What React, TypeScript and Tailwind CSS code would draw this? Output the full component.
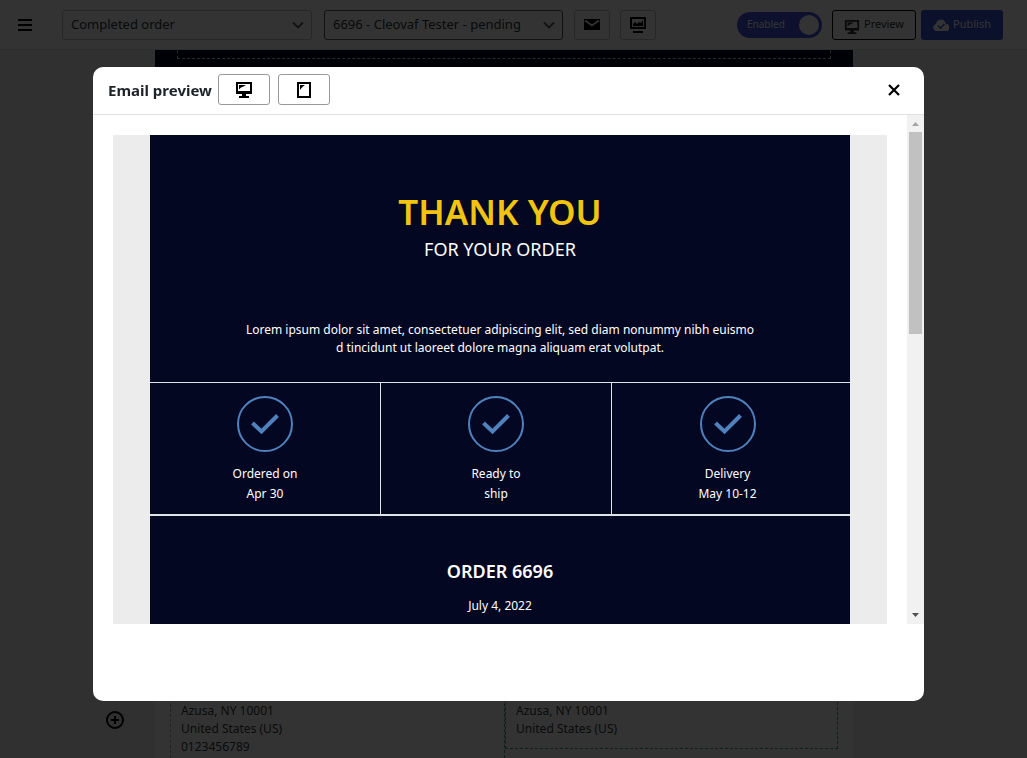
import React from "react";

function ScreenIcon({ className }: { className?: string }) {
  return (
    <svg viewBox="0 0 18 18" className={className} fill="currentColor" aria-hidden="true">
      <path fillRule="evenodd" d="M1 1h16v12h-6v2h3v2H4v-2h3v-2H1V1zm2 2v7h12V3H3z" />
      <path d="M4 4h7L8.500 5.500 6 6.500 4 8.500z" />
    </svg>
  );
}

function TabletIcon({ className }: { className?: string }) {
  return (
    <svg viewBox="0 0 18 18" className={className} fill="currentColor" aria-hidden="true">
      <path fillRule="evenodd" d="M2 1h14v16H2V1zm2 2v12h10V3H4z" />
      <path d="M5 4h5L8 5.500 6.500 7 5 9z" />
    </svg>
  );
}

function Chevron() {
  return (
    <svg
      viewBox="0 0 12 12"
      className="pointer-events-none absolute right-2 top-[9px] size-3"
      fill="none"
      stroke="#50575e"
      strokeWidth="1.800"
      aria-hidden="true"
    >
      <path d="M1 3.500l5 5 5-5" />
    </svg>
  );
}

function Picker({ label, value, box, tone }: { label: string; value: string; box: string; tone: string }) {
  return (
    <div className={`relative ${box}`}>
      <select
        aria-label={label}
        defaultValue={value}
        className={`block h-[30px] w-full appearance-none rounded-[3px] border bg-white pl-2 pr-6 text-[13px] text-[#2c3338] ${tone}`}
      >
        <option>{value}</option>
      </select>
      <Chevron />
    </div>
  );
}

function TopBar() {
  return (
    <header className="flex h-[50px] shrink-0 items-center border-b border-[#e0e0e0] bg-white pl-[18px] pr-6">
      <button aria-label="Menu" className="mr-[30px]">
        <svg viewBox="0 0 14 12" className="h-3 w-[14px]" aria-hidden="true">
          <path d="M0 0h14v2H0zM0 5h14v2H0zM0 10h14v2H0z" />
        </svg>
      </button>
      <Picker label="Email template" value="Completed order" box="w-[250px]" tone="border-[#c3c4c7]" />
      <Picker
        label="Order"
        value="6696 - Cleovaf Tester - pending"
        box="ml-3 w-[239px]"
        tone="border-[#50575e]"
      />
      <button
        aria-label="Send email"
        className="ml-[11px] flex h-[30px] w-9 items-center justify-center rounded-[3px] border border-[#c3c4c7]"
      >
        <svg viewBox="0 0 16 11" className="h-[11px] w-4" aria-hidden="true">
          <path d="M0 0h16v11H0z" />
          <path d="M1 1.5l7 5 7-5" fill="none" stroke="#fff" strokeWidth="1.8" />
        </svg>
      </button>
      <button
        aria-label="Statistics"
        className="ml-[10px] flex h-[30px] w-9 items-center justify-center rounded-[3px] border border-[#c3c4c7]"
      >
        <svg viewBox="0 0 16 16" className="size-4" aria-hidden="true">
          <path fillRule="evenodd" d="M0 0h16v12H0V0zm2 2v8h12V2H2z" />
          <path d="M3 9V7l2-2 2 2 2-2 2 1 2-3v6zM3 14h10v2H3z" />
        </svg>
      </button>
      <div className="ml-auto flex items-center">
        <label className="flex h-[26px] w-[85px] items-center justify-between rounded-full bg-[#4355e0] pl-[10px] pr-[3px] text-[10px] text-white">
          Enabled
          <input type="checkbox" defaultChecked className="sr-only" />
          <span className="size-5 rounded-full bg-white" />
        </label>
        <button className="ml-[10px] flex h-[30px] w-[84px] items-center justify-center gap-1 rounded-[3px] border border-black text-[11px] text-[#2c3338]">
          <ScreenIcon className="mt-1 size-4" />
          Preview
        </button>
        <button className="ml-[5px] flex h-[30px] w-[82px] items-center justify-center gap-1 rounded-[3px] bg-[#3b4fd8] text-[11px] text-white">
          <svg viewBox="0 0 16 12" className="h-3 w-4" aria-hidden="true">
            <path
              fill="#fff"
              d="M13 5a3 3 0 0 1 0 7H3.500a3.500 3.500 0 0 1-.5-6.900A5 5 0 0 1 12.500 3.500z"
            />
            <path d="M5 6.500l2.500 2.500L11.500 5" fill="none" stroke="#3b4fd8" strokeWidth="1.600" />
          </svg>
          Publish
        </button>
      </div>
    </header>
  );
}

function Canvas() {
  return (
    <div className="relative flex min-h-0 flex-1 flex-col bg-[#f0f0f0] pl-[155px] pr-[174px]">
      <div className="flex min-h-0 flex-1 flex-col bg-white">
        <div className="flex-1 bg-[#040722] px-[22px]">
          <div className="h-[9px] border border-t-0 border-dashed border-[#ccc]" />
        </div>
        <div className="grid h-20 grid-cols-2 px-[15px] text-xs leading-[18px] text-[#33373b]">
          <address className="border-l border-dashed border-[#aaa] pl-[10px] pt-6 not-italic">
            Azusa, NY 10001
            <br />
            United States (US)
            <br />
            0123456789
          </address>
          <div className="border-l border-dashed border-[#5b9b77]">
            <address className="h-[71px] border border-t-0 border-dashed border-[#5b9b77] pl-[10px] pt-6 not-italic">
              Azusa, NY 10001
              <br />
              United States (US)
            </address>
          </div>
        </div>
      </div>
      <button aria-label="Add element" className="absolute bottom-[29px] left-[106px]">
        <svg viewBox="0 0 18 18" className="size-[18px]" fill="none" stroke="#000" strokeWidth="2" aria-hidden="true">
          <circle cx="9" cy="9" r="8" />
          <path d="M9 5v8M5 9h8" />
        </svg>
      </button>
    </div>
  );
}

function Step({ top, bottom, last }: { top: string; bottom: string; last?: boolean }) {
  return (
    <div
      className={`flex flex-col items-center pt-[13px] ${last ? "flex-1 pr-[7px]" : "w-[231px] border-r border-[#dde5e5]"}`}
    >
      <svg viewBox="0 0 56 56" className="size-14" fill="none" stroke="#4f81bd" aria-hidden="true">
        <circle cx="28" cy="28" r="27" strokeWidth="2" />
        <path d="M15.500 27l9 8.500L40.500 19.500" strokeWidth="4" />
      </svg>
      <p className="mt-3 text-center">
        {top}
        <br />
        {bottom}
      </p>
    </div>
  );
}

function Email() {
  return (
    <article className="mx-auto w-[700px] bg-[#040722] pb-20 text-center text-xs leading-5 text-white">
      <h1 className="pt-[52px] text-[35px] font-semibold leading-[50px] text-[#f1c40f]">THANK YOU</h1>
      <p className="text-lg leading-6">FOR YOUR ORDER</p>
      <p className="pb-[25px] pt-[60px] leading-[18px]">
        Lorem ipsum dolor sit amet, consectetuer adipiscing elit, sed diam nonummy nibh euismo
        <br />d tincidunt ut laoreet dolore magna aliquam erat volutpat.
      </p>
      <div className="flex h-[134px] border-b-2 border-t border-[#dde5e5]">
        <Step top="Ordered on" bottom="Apr 30" />
        <Step top="Ready to" bottom="ship" />
        <Step top="Delivery" bottom="May 10-12" last />
      </div>
      <h2 className="pt-[41px] text-lg font-semibold leading-7">ORDER 6696</h2>
      <p className="pt-[11px]">July 4, 2022</p>
    </article>
  );
}

function Scrollbar() {
  return (
    <div className="flex w-[17px] shrink-0 flex-col items-center bg-[#f1f1f1]" aria-hidden="true">
      <svg viewBox="0 0 17 17" className="size-[17px]">
        <path d="M5 11h7L8.500 7z" fill="#a3a3a3" />
      </svg>
      <div className="h-[202px] w-[13px] bg-[#c1c1c1]" />
      <svg viewBox="0 0 17 17" className="mt-auto size-[17px]">
        <path d="M5 6h7L8.500 10z" fill="#505050" />
      </svg>
    </div>
  );
}

function PreviewDialog() {
  return (
    <div className="fixed inset-0 flex bg-black/80 pb-[57px] pl-[93px] pr-[103px] pt-[67px]">
      <section
        role="dialog"
        aria-label="Email preview"
        className="flex min-w-0 flex-1 flex-col overflow-hidden rounded-[10px] bg-white pb-[77px]"
      >
        <header className="flex h-12 shrink-0 items-center border-b border-[#dee2e6] pb-0.5 pl-[15px] pr-6 text-[#1d2327]">
          <h2 className="w-[110px] whitespace-nowrap pt-0.5 text-[15px] font-bold">Email preview</h2>
          <button
            aria-label="Desktop view"
            className="flex h-[31px] w-[52px] items-center justify-center rounded-[3px] border border-[#999] text-black"
          >
            <ScreenIcon className="size-[18px]" />
          </button>
          <button
            aria-label="Tablet view"
            className="ml-2 flex h-[31px] w-[52px] items-center justify-center rounded-[3px] border border-[#999] text-black"
          >
            <TabletIcon className="size-[18px]" />
          </button>
          <button aria-label="Close" className="ml-auto">
            <svg viewBox="0 0 12 12" className="size-3" stroke="#000" strokeWidth="2.200" aria-hidden="true">
              <path d="M1 1l10 10M11 1L1 11" />
            </svg>
          </button>
        </header>
        <div className="flex min-h-0 flex-1">
          <div className="min-w-0 flex-1 overflow-y-auto px-5 pt-5 [scrollbar-width:none]">
            <div className="bg-[#ececec]">
              <Email />
            </div>
          </div>
          <Scrollbar />
        </div>
      </section>
    </div>
  );
}

export default function App() {
  return (
    <div className="flex h-screen flex-col overflow-hidden bg-[#f0f0f0] font-['Noto_Sans','Open_Sans',sans-serif]">
      <TopBar />
      <Canvas />
      <PreviewDialog />
    </div>
  );
}
